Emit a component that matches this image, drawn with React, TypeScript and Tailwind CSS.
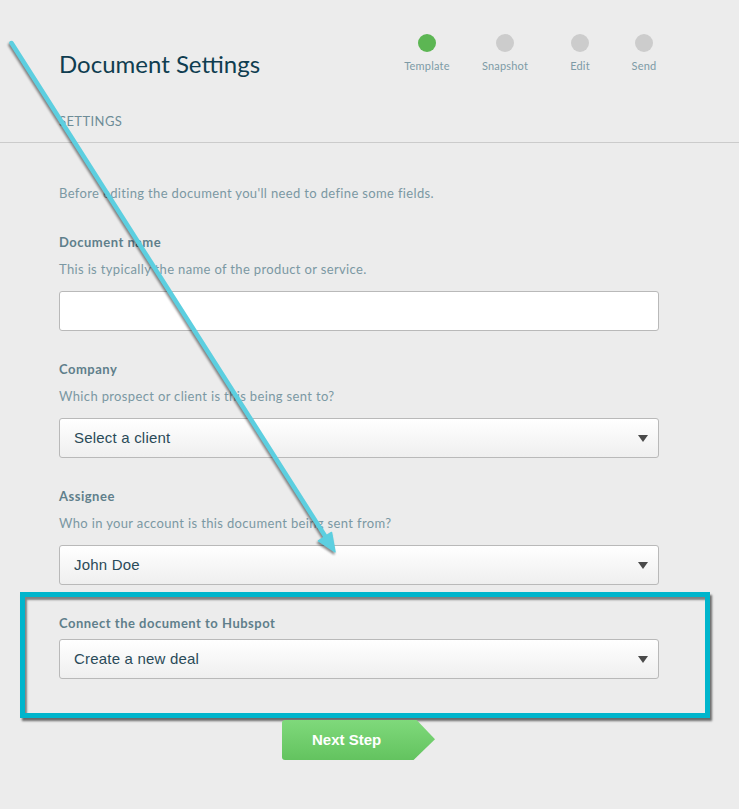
import React from "react";

const steps = [
  { label: "Template", active: true, gap: "ml-0" },
  { label: "Snapshot", active: false, gap: "ml-[18px]" },
  { label: "Edit", active: false, gap: "ml-[15px]" },
  { label: "Send", active: false, gap: "ml-[4px]" },
];

function Caret() {
  return (
    <svg width="10" height="7" viewBox="0 0 10 7" className="shrink-0">
      <path d="M0 0 H10 L5 7 Z" fill="#4a4a4a" />
    </svg>
  );
}

function SelectBox({ value }: { value: string }) {
  return (
    <div className="flex h-[40px] w-[600px] items-center justify-between rounded-[3px] border border-[#b9b9b9] bg-gradient-to-b from-white to-[#efefef] pl-[14px] pr-[10px]">
      <span className="font-['Liberation_Sans',Arial,sans-serif] text-[15px] tracking-[0.2px] text-[#2a4a58]">{value}</span>
      <Caret />
    </div>
  );
}

function Field({ label, hint, children }: { label: string; hint: string; children: React.ReactNode }) {
  return (
    <div className="mt-[33px]">
      <div className="text-[13px] leading-[16px] font-bold tracking-[0.5px] text-[#5f7f8b]">{label}</div>
      <div className="mt-[11px] text-[13px] leading-[16px] tracking-[0.35px] text-[#7b98a3]">{hint}</div>
      <div className="mt-[14px]">{children}</div>
    </div>
  );
}

export default function App() {
  return (
    <div className="relative min-h-screen bg-[#ececec] font-['Lato','Open_Sans',sans-serif] overflow-hidden">
      <header className="border-b border-[#cbcbcb] px-[59px] pb-[13px]">
        <div className="flex items-start">
          <h1 className="mt-[49px] text-[24px] leading-[30px] text-[#0f3d50]">Document Settings</h1>
          <div className="ml-auto mr-[6px] mt-[34px] flex">
            {steps.map((s) => (
              <div key={s.label} className={`flex w-[60px] flex-col items-center ${s.gap}`}>
                <div className={`h-[18px] w-[18px] rounded-full ${s.active ? "bg-[#5cb653]" : "bg-[#cccccc]"}`} />
                <div className="mt-[7px] text-[11px] leading-[14px] tracking-[0.2px] text-[#7d9ba6]">{s.label}</div>
              </div>
            ))}
          </div>
        </div>
        <div className="mt-[34px] text-[13px] leading-[16px] tracking-[0.4px] text-[#6e8c97]">SETTINGS</div>
      </header>

      <main className="px-[59px]">
        <p className="mt-[42px] text-[13px] leading-[16px] tracking-[0.35px] text-[#7b98a3]">
          Before editing the document you'll need to define some fields.
        </p>

        <Field label="Document name" hint="This is typically the name of the product or service.">
          <div className="h-[40px] w-[600px] rounded-[3px] border border-[#b9b9b9] bg-white" />
        </Field>

        <div className="-mt-[3px]">
          <Field label="Company" hint="Which prospect or client is this being sent to?">
            <SelectBox value="Select a client" />
          </Field>
        </div>

        <div className="-mt-[3px]">
          <Field label="Assignee" hint="Who in your account is this document being sent from?">
            <SelectBox value="John Doe" />
          </Field>
        </div>

        <div className="mt-[7px] -ml-[39px] w-[690px] border-[5px] border-[#00b5cc] pl-[34px] pr-[46px] pt-[18px] pb-[34px] shadow-[2px_3px_2px_rgba(0,0,0,0.55),inset_2px_3px_2px_rgba(0,0,0,0.45)]">
          <div className="text-[13px] leading-[16px] font-bold tracking-[0.5px] text-[#5f7f8b]">Connect the document to Hubspot</div>
          <div className="mt-[8px]">
            <SelectBox value="Create a new deal" />
          </div>
        </div>

        <div className="ml-[223px] mt-[2px] flex h-[40px] w-[153px] items-center rounded-l-[3px] bg-gradient-to-b from-[#7fd97b] to-[#63c35f] pl-[30px] [clip-path:polygon(0_0,88%_0,100%_48%,86%_100%,0_100%)]">
          <span className="font-['Liberation_Sans',Arial,sans-serif] text-[15px] font-bold text-white">Next Step</span>
        </div>
      </main>

      <svg
        className="pointer-events-none absolute left-0 top-0 drop-shadow-[-1px_2px_1px_rgba(0,0,0,0.45)]"
        width="739"
        height="809"
        viewBox="0 0 739 809"
      >
        <line x1="11.5" y1="43" x2="327" y2="539" stroke="#5ccfe0" strokeWidth="4.5" strokeLinecap="round" />
        <path d="M335 552 L318.5 541 L331.5 532.5 Z" fill="#5ccfe0" stroke="#5ccfe0" strokeWidth="1.5" strokeLinejoin="round" />
      </svg>
    </div>
  );
}
